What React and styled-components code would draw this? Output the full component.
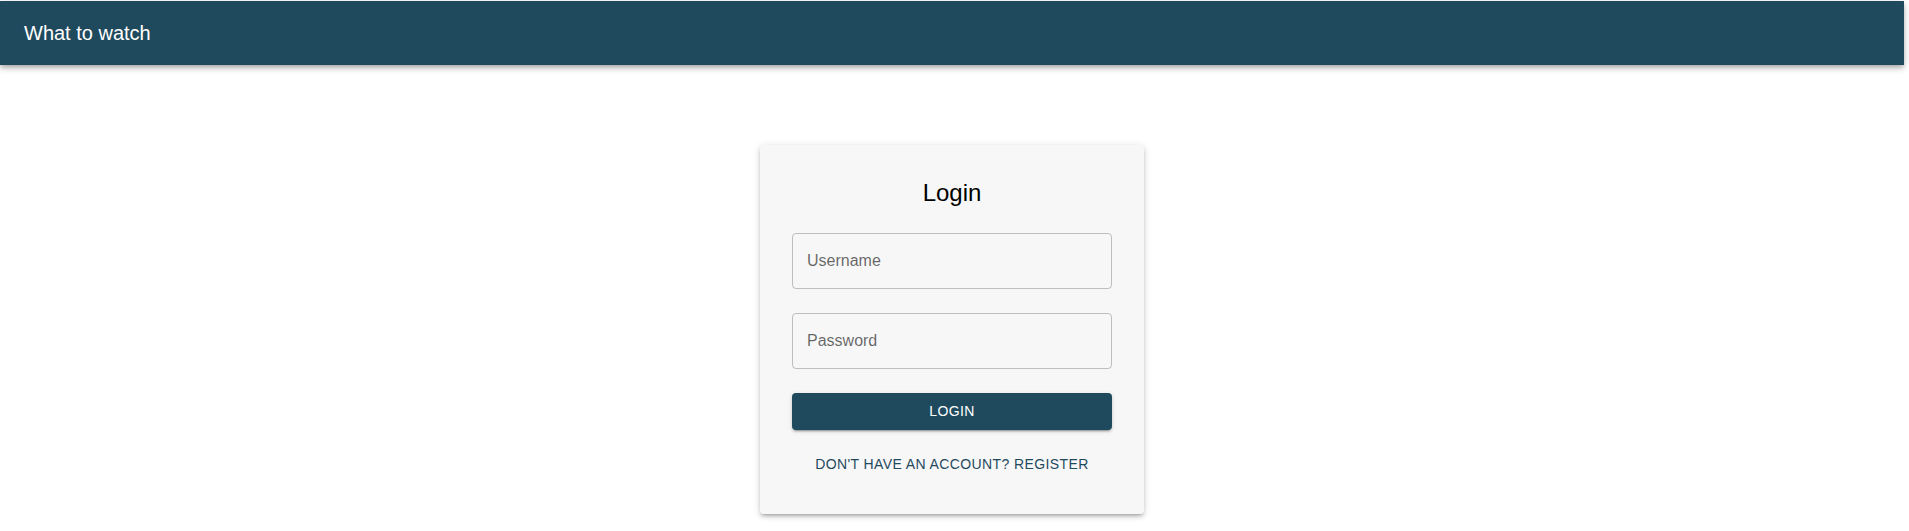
import React from 'react';
import styled, { createGlobalStyle } from 'styled-components';

const primary = '#1f4a5e';

const GlobalStyle = createGlobalStyle`
    * { box-sizing: border-box; }
    body {
        margin: 0;
        background: #ffffff;
        font-family: "Liberation Sans", Arial, Helvetica, sans-serif;
    }
`;

function App() {
    return (
        <Page>
            <GlobalStyle />
            <Header>
                <Brand>What to watch</Brand>
            </Header>
            <Main>
                <Card>
                    <Title>Login</Title>
                    <Field>
                        <Input placeholder="Username" />
                    </Field>
                    <Field>
                        <Input type="password" placeholder="Password" />
                    </Field>
                    <LoginButton>Login</LoginButton>
                    <TextButton>Don't have an account? Register</TextButton>
                </Card>
            </Main>
        </Page>
    );
}

export default App;

const Page = styled.div`
    width: calc(100vw - 5px);
    padding-top: 1px;
    min-height: 100vh;
`;

const Header = styled.header`
    height: 64px;
    background-color: ${primary};
    display: flex;
    align-items: center;
    padding: 0 24px;
    box-shadow: 0px 2px 4px -1px rgba(0,0,0,0.2), 0px 4px 5px 0px rgba(0,0,0,0.14), 0px 1px 10px 0px rgba(0,0,0,0.12);
    position: relative;
    z-index: 1;
`;

const Brand = styled.h6`
    margin: 0;
    color: #ffffff;
    font-size: 20px;
    font-weight: 400;
    line-height: 1.6;
`;

const Main = styled.main`
    display: flex;
    justify-content: center;
    padding-top: 80px;
`;

const Card = styled.div`
    width: 384px;
    padding: 32px;
    background: #f7f7f7;
    border-radius: 4px;
    box-shadow: 0px 3px 3px -2px rgba(0,0,0,0.2), 0px 3px 4px 0px rgba(0,0,0,0.14), 0px 1px 8px 0px rgba(0,0,0,0.12);
    display: flex;
    flex-direction: column;
    align-items: stretch;
`;

const Title = styled.h5`
    margin: 0 0 24px;
    text-align: center;
    font-size: 24px;
    font-weight: 400;
    line-height: 32px;
    color: #000000;
`;

const Field = styled.div`
    margin-bottom: 24px;
`;

const Input = styled.input`
    width: 100%;
    height: 56px;
    padding: 0 14px;
    border: 1px solid rgba(0,0,0,0.23);
    border-radius: 4px;
    background: transparent;
    font-family: inherit;
    font-size: 16px;
    color: rgba(0,0,0,0.87);
    outline: none;
    &::placeholder {
        color: rgba(0,0,0,0.6);
    }
`;

const LoginButton = styled.button`
    height: 36.5px;
    border: none;
    border-radius: 4px;
    background-color: ${primary};
    color: #ffffff;
    font-family: inherit;
    font-size: 14px;
    font-weight: 500;
    letter-spacing: 0.4px;
    text-transform: uppercase;
    box-shadow: 0px 3px 1px -2px rgba(0,0,0,0.2), 0px 2px 2px 0px rgba(0,0,0,0.14), 0px 1px 5px 0px rgba(0,0,0,0.12);
    cursor: pointer;
`;

const TextButton = styled.button`
    margin-top: 16px;
    height: 36.5px;
    border: none;
    background: transparent;
    color: ${primary};
    font-family: inherit;
    font-size: 14px;
    font-weight: 400;
    letter-spacing: 0.4px;
    text-transform: uppercase;
    cursor: pointer;
`;
